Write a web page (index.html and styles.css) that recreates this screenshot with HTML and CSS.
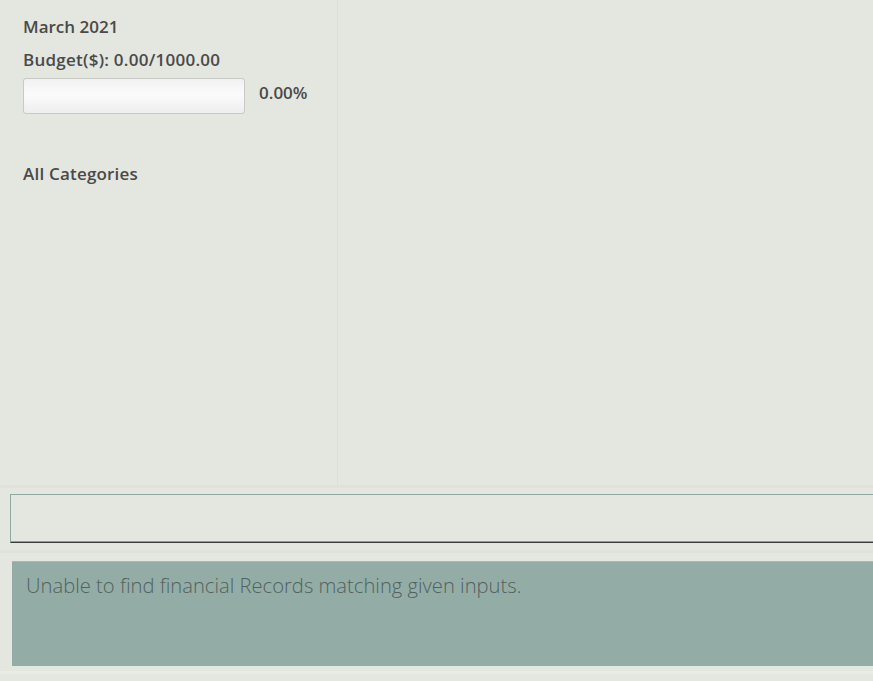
FILE: index.html
```html
<!DOCTYPE html>
<html>
<head>
<meta charset="utf-8">
<link rel="stylesheet" href="styles.css">
</head>
<body>
<div class="app">
  <div class="top">
    <aside class="sidebar">
      <div class="month">March 2021</div>
      <div class="budget">Budget($): 0.00/1000.00</div>
      <div class="progress-row">
        <div class="progress"><div class="fill" style="width:0%"></div></div>
        <span class="pct">0.00%</span>
      </div>
      <div class="cats">All Categories</div>
    </aside>
    <section class="content"></section>
  </div>
  <div class="sep"></div>
  <div class="input-area">
    <div class="field"></div>
  </div>
  <div class="sep sep2"></div>
  <div class="results">
    <div class="message">Unable to find financial Records matching given inputs.</div>
  </div>
  <div class="sep sep3"></div>
</div>
</body>
</html>
```
FILE: styles.css
```css
html, body {
  margin: 0;
  padding: 0;
  background: #e4e6e0;
  overflow: hidden;
  height: 100%;
}
.app {
  width: 873px;
  height: 681px;
  display: flex;
  flex-direction: column;
  font-family: "Open Sans", "Noto Sans", sans-serif;
  color: #4a4a48;
}
.top {
  display: flex;
  height: 485px;
  flex: none;
}
.sidebar {
  width: 314px;
  padding: 17px 0 0 23px;
  border-right: 1px solid #dcdfd8;
  box-sizing: content-box;
}
.month, .budget, .cats {
  font-size: 17px;
  font-weight: 600;
  line-height: 20px;
  white-space: nowrap;
}
.budget {
  margin-top: 13px;
  letter-spacing: 0.25px;
}
.cats {
  margin-top: 50px;
  letter-spacing: 0.2px;
}
.progress-row {
  display: flex;
  align-items: center;
  margin-top: 8px;
  gap: 14px;
}
.progress {
  width: 222px;
  height: 36px;
  box-sizing: border-box;
  border: 1px solid #c9cac6;
  border-radius: 3px;
  background: linear-gradient(#f1f1f1 0%, #fbfbfb 45%, #eeeeee 100%);
}
.fill {
  height: 100%;
}
.pct {
  font-size: 17px;
  font-weight: 600;
  margin-top: -8px;
}
.content {
  flex: 1;
}
.sep {
  height: 3px;
  flex: none;
  background: #dfe1db;
}
.input-area {
  padding: 6px 0 0 10px;
  height: 62px;
  box-sizing: border-box;
  flex: none;
}
.field {
  height: 49px;
  box-sizing: border-box;
  border-top: 1px solid #8fa9a2;
  border-left: 1px solid #8fa9a2;
  border-bottom: 1px solid #3a3a3a;
  box-shadow: inset 0 -1px 0 #9a9a9a;
}
.results {
  padding: 8px 0 0 12px;
  height: 118px;
  box-sizing: border-box;
  flex: none;
}
.message {
  height: 105px;
  box-sizing: border-box;
  background: #93ada6;
  border-top: 1px solid #a6b9b3;
  padding: 10px 0 0 14px;
  font-size: 20.2px;
  font-weight: 300;
  color: #52625e;
  line-height: 26px;
}
.sep3 {
  background: #e9ebe6;
}
```
